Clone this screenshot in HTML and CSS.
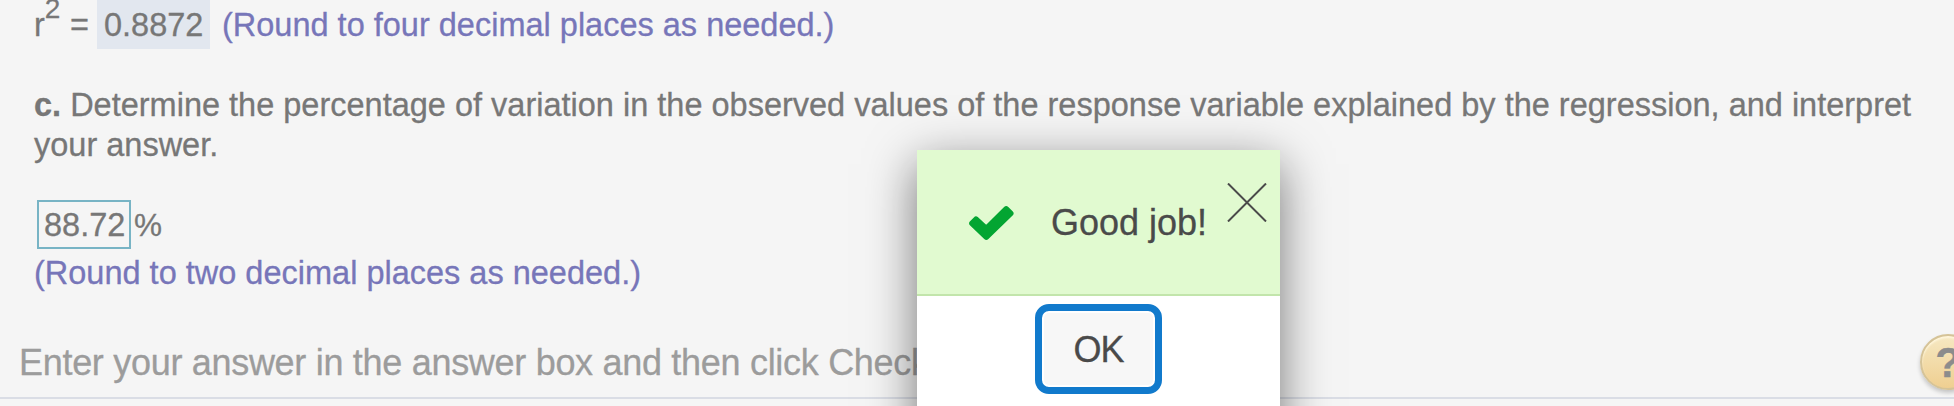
FILE: index.html
```html
<!DOCTYPE html>
<html lang="en">
<head>
<meta charset="utf-8">
<title>Exercise</title>
<link rel="stylesheet" href="styles.css">
</head>
<body>
<main class="exercise">
  <section class="content">
    <div class="result"><span class="var">r<span class="power">2</span></span><span class="equals">=</span><span class="value">0.8872</span><span class="hint">(Round to four decimal places as needed.)</span></div>
    <p class="question"><b>c.</b> Determine the percentage of variation in the observed values of the response variable explained by the regression, and interpret<br>your answer.</p>
    <div class="answer"><span class="box">88.72</span><span class="unit">%</span></div>
    <p class="hint">(Round to two decimal places as needed.)</p>
  </section>
  <footer class="prompt">
    <span class="prompt-text">Enter your answer in the answer box and then click Check</span>
    <span class="help">?</span>
  </footer>
</main>
<div class="dialog" role="dialog">
  <div class="dialog-head">
    <svg class="check" width="45" height="34" viewBox="0 0 45 34"><path d="M3.200 17.400L7 13.500L17.300 23L37.200 3.200L41.500 7.400L17.300 30.800Z" fill="#03a532" stroke="#03a532" stroke-width="6" stroke-linejoin="round"/></svg>
    <span class="message">Good job!</span>
    <svg class="close" width="40" height="39" viewBox="0 0 40 39"><path d="M1 .5L39 38.500M39 .5L1 38.500" stroke="#4a4a4a" stroke-width="2"/></svg>
  </div>
  <div class="dialog-body"><button class="ok">OK</button></div>
</div>
</body>
</html>
```
FILE: styles.css
```css
* { box-sizing: border-box; }
body {
  margin: 0;
  height: 406px;
  overflow: hidden;
  position: relative;
  background: #f5f5f5;
  color: #777;
  font: 32.5px/40px "Liberation Sans", Arial, sans-serif;
  -webkit-text-stroke: .3px;
}
p { margin: 0; }
.exercise { height: 406px; overflow: hidden; }
.content { height: 329px; padding-left: 34px; white-space: nowrap; }
.hint { color: #7776b9; }
.result { display: flex; height: 85px; padding-top: 5px; }
.var { width: 36px; }
.power { font-size: 28px; line-height: 1; position: relative; top: -18px; }
.equals { width: 27px; }
.value { width: 113px; height: 49px; margin-top: -5px; padding: 5px 0 0 7px; background: #e2e7ef; }
.result .hint { margin-left: 12px; }
.question { height: 115px; }
.answer { display: flex; height: 53px; }
.box { width: 94px; height: 49px; margin-left: 3px; padding: 3px 0 0 5px; border: 2px solid #78b4c5; }
.unit { padding: 5px 0 0 3px; font-size: 31.5px; }
.prompt {
  display: flex;
  justify-content: space-between;
  height: 70px;
  padding: 14px 0 0 19px;
  border-bottom: 2px solid #dadde5;
  color: #9c9c9c;
  font-size: 36px;
  letter-spacing: -.3px;
  white-space: nowrap;
}
.help {
  flex: none;
  width: 56px;
  height: 56px;
  margin: -9px -22px 0 0;
  border: 2px solid #d5c398;
  border-radius: 50%;
  background: linear-gradient(#f6e8c2, #efcf91);
  box-shadow: 0 3px 4px rgba(0, 0, 0, .2), inset 0 2px 2px #fff6dc;
  color: #8c8c8c;
  font: bold 42px/54px "Liberation Sans", Arial, sans-serif;
  text-align: center;
}
.dialog {
  position: absolute;
  left: 917px;
  top: 150px;
  width: 363px;
  height: 300px;
  background: #fff;
  box-shadow: 0 14px 46px rgba(0, 0, 0, .53);
  color: #4a4a4a;
  font-size: 36px;
}
.dialog-head {
  display: flex;
  height: 146px;
  padding: 33px 0 0 52px;
  background: #e1fad0;
  border-bottom: 2px solid #c2e5ab;
}
.check { margin-top: 23px; }
.message { width: 174px; margin: 20px 0 0 37px; white-space: nowrap; }
.close { margin-left: 2px; }
.dialog-body { display: flex; justify-content: center; padding-top: 8px; }
.ok {
  width: 127px;
  height: 90px;
  padding: 2px 0 0;
  border: 7px solid #117acc;
  border-radius: 14px;
  background: #f7f7f7;
  box-shadow: inset 0 0 0 2px #fff;
  color: #4a4a4a;
  font: 36px/40px "Liberation Sans", Arial, sans-serif;
  letter-spacing: -1px;
  -webkit-text-stroke: .3px;
}
```
